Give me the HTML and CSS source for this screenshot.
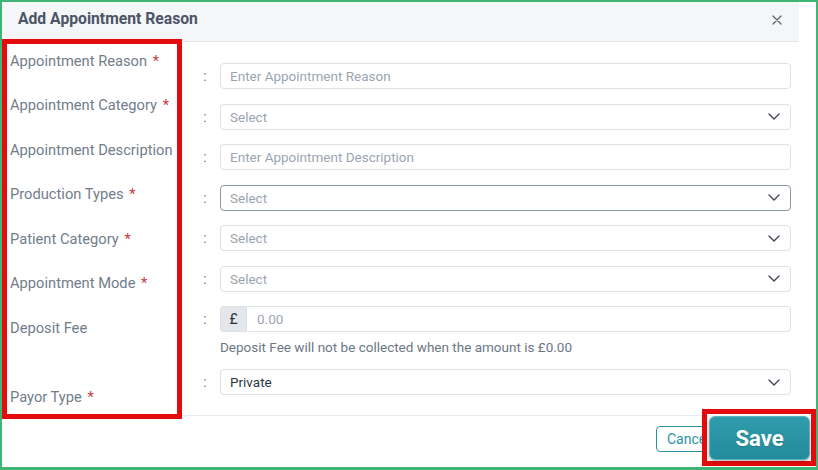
FILE: index.html
```html
<!DOCTYPE html>
<html lang="en">
<head>
<meta charset="utf-8">
<title>Add Appointment Reason</title>
<link rel="stylesheet" href="styles.css">
</head>
<body>
<div class="frame">
  <div class="modal">
    <div class="modal-header">
      <h2 class="modal-title">Add Appointment Reason</h2>
      <button class="close" type="button" aria-label="Close">
        <svg width="10" height="10" viewBox="0 0 10 10"><path d="M1 1L9 9M9 1L1 9" stroke="#5b6572" stroke-width="1.3" stroke-linecap="round" fill="none"/></svg>
      </button>
    </div>

    <div class="modal-body">
      <div class="labels">
        <div class="label">Appointment Reason <span class="req">*</span></div>
        <div class="label">Appointment Category <span class="req">*</span></div>
        <div class="label">Appointment Description</div>
        <div class="label">Production Types <span class="req">*</span></div>
        <div class="label">Patient Category <span class="req">*</span></div>
        <div class="label">Appointment Mode <span class="req">*</span></div>
        <div class="label label-tall">Deposit Fee</div>
        <div class="label">Payor Type <span class="req">*</span></div>
      </div>

      <div class="fields">
        <div class="row">
          <span class="colon">:</span>
          <input class="control" type="text" placeholder="Enter Appointment Reason">
        </div>
        <div class="row">
          <span class="colon">:</span>
          <div class="control select"><span class="placeholder">Select</span><svg class="chev" width="12" height="7" viewBox="0 0 12 7"><path d="M1 1l5 5 5-5" stroke="#3f4852" stroke-width="1.4" fill="none" stroke-linecap="round" stroke-linejoin="round"/></svg></div>
        </div>
        <div class="row">
          <span class="colon">:</span>
          <input class="control" type="text" placeholder="Enter Appointment Description">
        </div>
        <div class="row">
          <span class="colon">:</span>
          <div class="control select focused"><span class="placeholder">Select</span><svg class="chev" width="12" height="7" viewBox="0 0 12 7"><path d="M1 1l5 5 5-5" stroke="#3f4852" stroke-width="1.4" fill="none" stroke-linecap="round" stroke-linejoin="round"/></svg></div>
        </div>
        <div class="row">
          <span class="colon">:</span>
          <div class="control select"><span class="placeholder">Select</span><svg class="chev" width="12" height="7" viewBox="0 0 12 7"><path d="M1 1l5 5 5-5" stroke="#3f4852" stroke-width="1.4" fill="none" stroke-linecap="round" stroke-linejoin="round"/></svg></div>
        </div>
        <div class="row">
          <span class="colon">:</span>
          <div class="control select"><span class="placeholder">Select</span><svg class="chev" width="12" height="7" viewBox="0 0 12 7"><path d="M1 1l5 5 5-5" stroke="#3f4852" stroke-width="1.4" fill="none" stroke-linecap="round" stroke-linejoin="round"/></svg></div>
        </div>
        <div class="row row-deposit">
          <span class="colon">:</span>
          <div class="input-group">
            <span class="addon">£</span>
            <input class="control group-input" type="text" placeholder="0.00">
          </div>
        </div>
        <p class="help">Deposit Fee will not be collected when the amount is £0.00</p>
        <div class="row">
          <span class="colon">:</span>
          <div class="control select"><span class="value">Private</span><svg class="chev" width="12" height="7" viewBox="0 0 12 7"><path d="M1 1l5 5 5-5" stroke="#3f4852" stroke-width="1.4" fill="none" stroke-linecap="round" stroke-linejoin="round"/></svg></div>
        </div>
      </div>
    </div>

    <div class="modal-footer">
      <button class="btn btn-outline" type="button">Cancel</button>
    </div>
  </div>

  <div class="mark mark-labels"></div>
  <div class="mark mark-save"><button class="save-big" type="button">Save</button></div>
</div>
</body>
</html>
```

FILE: styles.css
```css
* {
  box-sizing: border-box;
}

html,
body {
  margin: 0;
  padding: 0;
  background: #ffffff;
}

body {
  font-family: Roboto, "Liberation Sans", Arial, sans-serif;
  font-size: 14px;
  color: #333b45;
}

.frame {
  position: relative;
  width: 818px;
  height: 470px;
  border: 2px solid #3fb573;
  border-bottom-width: 3px;
  background: #ffffff;
  overflow: hidden;
}

.modal {
  width: 797px;
  height: 465px;
  display: flex;
  flex-direction: column;
  background: #ffffff;
}

/* header */
.modal-header {
  height: 40px;
  flex: none;
  display: flex;
  justify-content: space-between;
  align-items: flex-start;
  padding: 7px 17px 0 16px;
  background: #f5f6f8;
  border-bottom: 1px solid #e3e6ea;
}

.modal-title {
  margin: 0;
  font-size: 15.7px;
  line-height: 20px;
  font-weight: 700;
  color: #4a5565;
}

.close {
  width: 10px;
  height: 10px;
  margin-top: 5.5px;
  padding: 0;
  border: 0;
  background: none;
  display: flex;
}

/* body */
.modal-body {
  height: 373px;
  flex: none;
  display: flex;
}

.labels {
  width: 195px;
  flex: none;
  padding: 8.5px 0 0 8px;
  display: flex;
  flex-direction: column;
}

.label {
  height: 20px;
  line-height: 20px;
  margin-bottom: 24.5px;
  font-size: 14.7px;
  color: #727d8a;
  white-space: nowrap;
}

.label-tall {
  margin-bottom: 49px;
}

.req {
  margin-left: 2px;
  color: #cc3b3b;
}

.fields {
  flex: 1;
  padding: 21px 8px 0 0;
  display: flex;
  flex-direction: column;
}

.row {
  height: 26px;
  display: flex;
  align-items: center;
  margin-bottom: 14.5px;
}

.row-deposit {
  margin-bottom: 4.5px;
}

.colon {
  width: 16px;
  margin-right: 7px;
  text-align: center;
  color: #6f7a87;
  line-height: 20px;
}

.control {
  flex: 1;
  height: 26px;
  border: 1px solid #dde2e8;
  border-radius: 4px;
  background: #ffffff;
  padding: 0 9px;
  font: inherit;
  font-size: 13.5px;
  color: #2f3740;
  outline: none;
}

.control::placeholder {
  color: #9ba5b1;
}

.select {
  display: flex;
  align-items: center;
  justify-content: space-between;
  padding-right: 10px;
  line-height: 20px;
}

.select.focused {
  border-color: #8a99a6;
}

.placeholder {
  color: #9ba5b1;
}

.value {
  color: #2f3740;
}

.chev {
  flex: none;
}

.input-group {
  flex: 1;
  display: flex;
  height: 26px;
}

.addon {
  width: 26px;
  flex: none;
  display: flex;
  align-items: center;
  justify-content: center;
  background: #e3e7ec;
  border: 1px solid #dde2e8;
  border-right: 0;
  border-radius: 4px 0 0 4px;
  color: #2b2f35;
  font-size: 14px;
}

.group-input {
  border-radius: 0 4px 4px 0;
  padding-left: 10px;
}

.help {
  margin: 0 0 12.5px 23px;
  line-height: 20px;
  font-size: 13.5px;
  color: #6b7785;
  white-space: nowrap;
}

/* footer */
.modal-footer {
  flex: 1;
  display: flex;
  justify-content: flex-end;
  align-items: flex-start;
  padding: 10px 79px 0 0;
  border-top: 1px solid #e6e9ed;
}

.btn {
  height: 26px;
  padding: 0 10px;
  border-radius: 4px;
  font: inherit;
  font-size: 14px;
  line-height: 24px;
}

.btn-outline {
  width: 64px;
  border: 1px solid #2a95a6;
  color: #2a95a6;
  background: #ffffff;
  text-align: left;
}

/* annotation boxes drawn over the dialog */
.mark {
  position: absolute;
  border: 5px solid #e30b0b;
}

.mark-labels {
  left: 0;
  top: 37px;
  width: 180px;
  height: 380px;
}

.mark-save {
  left: 700px;
  top: 407px;
  width: 114px;
  height: 57px;
  background: #ffffff;
  display: flex;
  padding: 2px 1px 1px 2px;
}

.save-big {
  flex: 1;
  display: flex;
  align-items: center;
  justify-content: center;
  padding: 0;
  border-radius: 6px;
  border: 1px solid #5eb3c0;
  background: linear-gradient(#2f9cac, #248b9b);
  box-shadow: 0 1px 3px rgba(0, 0, 0, 0.35);
  color: #ffffff;
  font-family: inherit;
  font-size: 22px;
  font-weight: 700;
  text-shadow: 0 1px 1px rgba(0, 0, 0, 0.15);
}
```
